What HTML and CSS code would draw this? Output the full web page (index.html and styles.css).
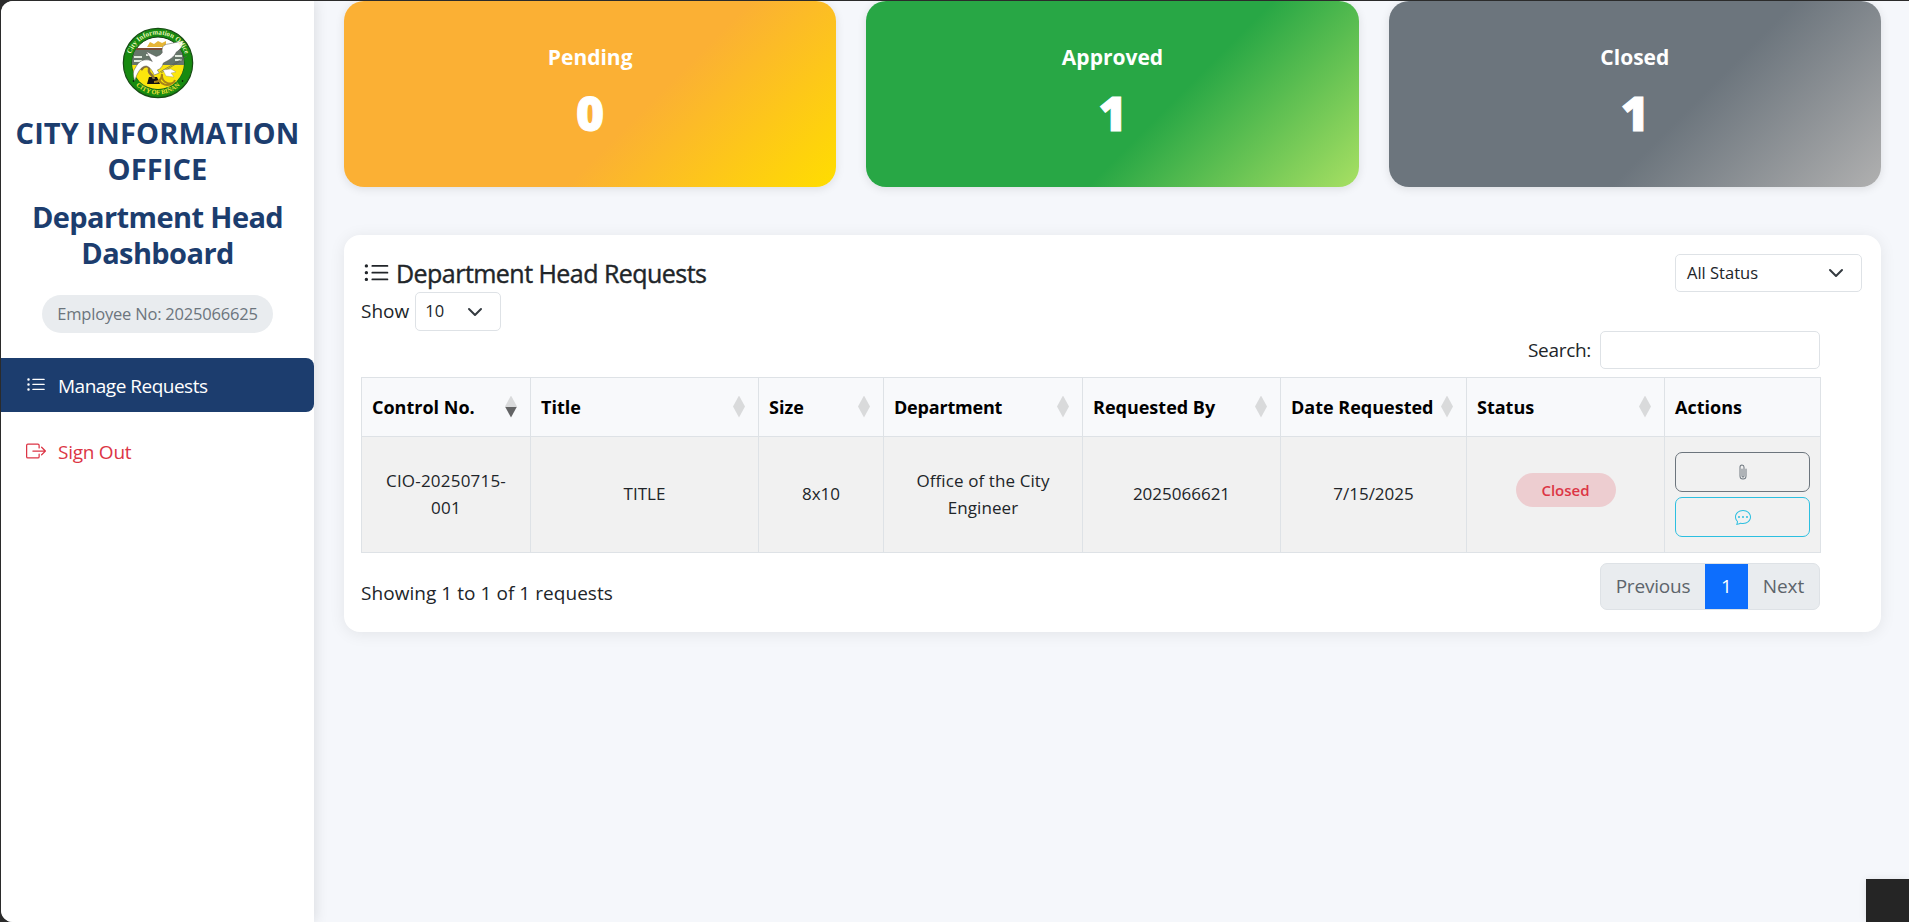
FILE: index.html
```html
<!DOCTYPE html>
<html lang="en">
<head>
<meta charset="utf-8">
<title>Department Head Dashboard</title>
<link rel="stylesheet" href="styles.css">
</head>
<body>
<div class="window">
  <aside class="sidebar">
    <svg class="seal" viewBox="0 0 72 72">
      <defs>
        <path id="arc-top" d="M7.500 36a28.500 28.500 0 0 1 57 0"/>
        <path id="arc-bottom" d="M4.500 36a31.500 31.500 0 0 0 63 0"/>
        <clipPath id="seal-inner"><circle cx="36" cy="36" r="26"/></clipPath>
      </defs>
      <circle cx="36" cy="36" r="34.700" fill="#178a10" stroke="#174c14" stroke-width="1.200"/>
      <circle cx="36" cy="36" r="26" fill="#fff" stroke="#123c10" stroke-width="1"/>
      <g clip-path="url(#seal-inner)">
        <path d="M8 38h56v28H8z" fill="#fbe60c"/>
        <path d="M10 27l4-5h44l4 5v11H10z" fill="#66766a"/>
        <path d="M10 21h52v2H10z" fill="#7d4b35"/>
        <path d="M12 29h8v2h-8zM12 33h8v2h-8zM24 27h4v2h-4zM53 28h7v2h-7zM53 32h7v2h-7z" fill="#dfe9dc"/>
        <path d="M25 20l3-5 4 2 4-3 4 2 4-2v6z" fill="#e6b535"/>
        <path d="M25 57l2-7h8l3 7z" fill="#111"/>
        <path d="M40 47c0 5-3 8-8 8M40 48c-1 8 11 12 13 5M37 53c3 5 8 6 12 4" fill="none" stroke="#a88418" stroke-width="2"/>
        <path d="M19 43c4-6 9-4 8 0s4 4 5 9" fill="none" stroke="#8b7038" stroke-width="2.500"/>
      </g>
      <path d="M12.800 54c-2-6-2-10 .5-13 2-4 5-7.500 9-8 3-.4 6 0 8 1.500l-6-10 4 2 6 3c3-1 5-2 6-4-1-5 1-8 6-8.500l14-3c2 3-2 9-6 11-2 5-7 8-13 11-1 4-3 6-6 7l2 3-5 2c-2-4-4-8-8-9-5 0-9 6-11.500 15z" fill="#fff" stroke="#555" stroke-width=".5"/>
      <path d="M65 29L38 45M62 32L39 46" stroke="#555" stroke-width=".6"/>
      <path d="M41 43l8-1 5 3-5 1 3 4-8-1z" fill="#fff" stroke="#777" stroke-width=".3"/>
      <text class="seal-text"><textPath href="#arc-top" startOffset="50%" text-anchor="middle">City Information Office</textPath></text>
      <text class="seal-text seal-city"><textPath href="#arc-bottom" startOffset="50%" text-anchor="middle">CITY OF BIÑAN</textPath></text>
      <circle cx="11.500" cy="54" r=".8"/><circle cx="60.500" cy="54" r=".8"/>
    </svg>
    <h1 class="brand">CITY INFORMATION<br>OFFICE</h1>
    <h2 class="brand role">Department Head<br>Dashboard</h2>
    <div class="employee">Employee No: 2025066625</div>
    <nav class="nav">
      <a class="nav-item active"><svg class="nav-icon" viewBox="0 0 16 16"><path fill="currentColor" fill-rule="evenodd" d="M5 11.500a.5.5 0 0 1 .5-.5h9a.5.5 0 0 1 0 1h-9a.5.5 0 0 1-.5-.5m0-4a.5.5 0 0 1 .5-.5h9a.5.5 0 0 1 0 1h-9a.5.5 0 0 1-.5-.5m0-4a.5.5 0 0 1 .5-.5h9a.5.5 0 0 1 0 1h-9a.5.5 0 0 1-.5-.5m-3 1a1 1 0 1 0 0-2 1 1 0 0 0 0 2m0 4a1 1 0 1 0 0-2 1 1 0 0 0 0 2m0 4a1 1 0 1 0 0-2 1 1 0 0 0 0 2"/></svg><span class="nav-text">Manage Requests</span></a>
      <a class="nav-item signout"><svg class="nav-icon" viewBox="0 0 16 16"><path fill="currentColor" fill-rule="evenodd" d="M10 12.500a.5.5 0 0 1-.5.5h-8a.5.5 0 0 1-.5-.5v-9a.5.5 0 0 1 .5-.5h8a.5.5 0 0 1 .5.5v2a.5.5 0 0 0 1 0v-2A1.500 1.500 0 0 0 9.500 2h-8A1.500 1.500 0 0 0 0 3.500v9A1.500 1.500 0 0 0 1.500 14h8a1.500 1.500 0 0 0 1.500-1.500v-2a.5.5 0 0 0-1 0z"/><path fill="currentColor" fill-rule="evenodd" d="M15.854 8.354a.5.5 0 0 0 0-.708l-3-3a.5.5 0 0 0-.708.708L14.293 7.500H5.500a.5.5 0 0 0 0 1h8.793l-2.147 2.146a.5.5 0 0 0 .708.708z"/></svg><span class="nav-text">Sign Out</span></a>
    </nav>
  </aside>
  <main class="main">
    <section class="cards">
      <div class="card pending"><div class="card-label">Pending</div><div class="card-count">0</div></div>
      <div class="card approved"><div class="card-label">Approved</div><div class="card-count">1</div></div>
      <div class="card closed"><div class="card-label">Closed</div><div class="card-count">1</div></div>
    </section>
    <section class="panel">
      <div class="panel-head">
        <h3 class="panel-title"><svg class="title-icon" viewBox="0 0 16 16"><path fill="currentColor" fill-rule="evenodd" d="M5 11.500a.5.5 0 0 1 .5-.5h9a.5.5 0 0 1 0 1h-9a.5.5 0 0 1-.5-.5m0-4a.5.5 0 0 1 .5-.5h9a.5.5 0 0 1 0 1h-9a.5.5 0 0 1-.5-.5m0-4a.5.5 0 0 1 .5-.5h9a.5.5 0 0 1 0 1h-9a.5.5 0 0 1-.5-.5m-3 1a1 1 0 1 0 0-2 1 1 0 0 0 0 2m0 4a1 1 0 1 0 0-2 1 1 0 0 0 0 2m0 4a1 1 0 1 0 0-2 1 1 0 0 0 0 2"/></svg><span class="title-text">Department Head Requests</span></h3>
        <div class="select status-filter"><span>All Status</span><svg class="chevron" viewBox="0 0 16 16"><path d="M2 5l6 6 6-6"/></svg></div>
      </div>
      <div class="length"><span>Show</span><div class="select length-select"><span>10</span><svg class="chevron" viewBox="0 0 16 16"><path d="M2 5l6 6 6-6"/></svg></div></div>
      <div class="table-area">
        <div class="search"><label class="search-label" for="q">Search:</label><input id="q" class="search-input" type="text"></div>
        <table class="grid">
          <colgroup><col class="c1"><col class="c2"><col class="c3"><col class="c4"><col class="c5"><col class="c6"><col class="c7"><col class="c8"></colgroup>
          <thead><tr>
            <th><div class="th desc"><span>Control No.</span><i class="sort"></i></div></th>
            <th><div class="th"><span>Title</span><i class="sort"></i></div></th>
            <th><div class="th"><span>Size</span><i class="sort"></i></div></th>
            <th><div class="th tight"><span>Department</span><i class="sort"></i></div></th>
            <th><div class="th"><span>Requested By</span><i class="sort"></i></div></th>
            <th><div class="th"><span>Date Requested</span><i class="sort"></i></div></th>
            <th><div class="th"><span>Status</span><i class="sort"></i></div></th>
            <th><div class="th"><span>Actions</span></div></th>
          </tr></thead>
          <tbody><tr>
            <td class="control">CIO-20250715-<br>001</td>
            <td>TITLE</td>
            <td>8x10</td>
            <td class="dept">Office of the City<br>Engineer</td>
            <td>2025066621</td>
            <td>7/15/2025</td>
            <td class="state"><span class="badge">Closed</span></td>
            <td class="tools"><div class="actions">
              <button class="btn attach"><svg class="btn-icon" viewBox="0 0 16 16"><path fill="currentColor" d="M4.500 3a2.500 2.500 0 0 1 5 0v9a1.500 1.500 0 0 1-3 0V5a.5.5 0 0 1 1 0v7a.5.5 0 0 0 1 0V3a1.500 1.500 0 1 0-3 0v9a2.500 2.500 0 0 0 5 0V5a.5.5 0 0 1 1 0v7a3.500 3.500 0 1 1-7 0z"/></svg></button>
              <button class="btn chat"><svg class="btn-icon" viewBox="0 0 16 16"><path fill="currentColor" d="M5 8a1 1 0 1 1-2 0 1 1 0 0 1 2 0m4 0a1 1 0 1 1-2 0 1 1 0 0 1 2 0m3 1a1 1 0 1 0 0-2 1 1 0 0 0 0 2"/><path fill="currentColor" d="m2.165 15.803.02-.004c1.830-.363 2.948-.842 3.468-1.105A9 9 0 0 0 8 15c4.418 0 8-3.134 8-7s-3.582-7-8-7-8 3.134-8 7c0 1.760.743 3.370 1.970 4.600a10.400 10.400 0 0 1-.524 2.318l-.003.011a11 11 0 0 1-.244.637c-.079.186.074.394.273.362a22 22 0 0 0 .693-.125m.8-3.108a1 1 0 0 0-.287-.801C1.618 10.830 1 9.468 1 8c0-3.192 3.004-6 7-6s7 2.808 7 6-3.004 6-7 6a8 8 0 0 1-2.088-.272 1 1 0 0 0-.711.074c-.387.196-1.240.570-2.634.893a11 11 0 0 0 .398-2"/></svg></button>
            </div></td>
          </tr></tbody>
        </table>
        <div class="table-foot">
          <div class="info">Showing 1 to 1 of 1 requests</div>
          <div class="pager"><span class="page prev">Previous</span><span class="page current">1</span><span class="page next">Next</span></div>
        </div>
      </div>
    </section>
  </main>
</div>
<div class="corner-box"></div>
</body>
</html>
```

FILE: styles.css
```css
* { box-sizing: border-box; }
body {
  margin: 0;
  width: 1909px;
  height: 922px;
  overflow: hidden;
  background: #2b2b2b;
  color: #212529;
  font-family: "Open Sans", "Noto Sans", sans-serif;
  font-size: 19px;
  line-height: 1.5;
}
.window {
  display: flex;
  width: 1908px;
  height: 921px;
  margin: 1px 0 0 1px;
  border-radius: 12px 0 0 12px;
  overflow: hidden;
  background: #f5f7fb;
}
.sidebar {
  position: relative;
  display: flex;
  flex-direction: column;
  align-items: center;
  width: 313px;
  height: 921px;
  padding-top: 26px;
  background: #fff;
  box-shadow: 2px 0 12px rgba(0, 0, 0, 0.1);
}
.seal { width: 72px; height: 72px; margin-bottom: 16px; }
.seal-text { font: 700 7px "Liberation Serif", serif; fill: #e8f5b8; }
.seal-city { fill: #f3e23b; font-size: 6.500px; }
.brand {
  margin: 0 0 12px;
  color: #1c3d6e;
  font-size: 29px;
  font-weight: 700;
  line-height: 36px;
  letter-spacing: 0.1px;
  text-align: center;
}
.role { letter-spacing: -0.6px; }
.employee {
  width: 231px;
  height: 38px;
  margin-top: 12px;
  border-radius: 19px;
  background: #e9ecef;
  color: #6c757d;
  font-size: 16.500px;
  line-height: 38px;
  letter-spacing: -0.2px;
  text-align: center;
}
.nav { width: 100%; margin-top: 25px; }
.nav-item {
  display: flex;
  align-items: center;
  gap: 12px;
  height: 54px;
  margin-bottom: 12px;
  padding-left: 25px;
  border-radius: 0 8px 8px 0;
}
.nav-item.active { background: #1c3d6e; color: #fff; letter-spacing: -0.5px; }
.nav-item.signout { color: #dc3545; letter-spacing: -0.25px; }
.nav-icon { width: 20px; height: 20px; }
.nav-text { padding-top: 2px; }
.main { width: 1595px; padding: 0 28px 0 30px; }
.cards { display: grid; grid-template-columns: repeat(3, 1fr); gap: 30px; }
.card {
  height: 186px;
  padding-top: 39px;
  border-radius: 20px;
  box-shadow: 0 2px 10px rgba(0, 0, 0, 0.1);
  color: #fff;
  text-align: center;
}
.pending { background: linear-gradient(135deg, #fbb034 60%, #ffdd00 100%); }
.approved { background: linear-gradient(135deg, #28a745 60%, #a8e063 100%); }
.closed { background: linear-gradient(135deg, #6c757d 60%, #b0b0b0 100%); }
.card-label { font-size: 21px; font-weight: 700; line-height: 34px; }
.card-count { font-size: 48px; font-weight: 800; line-height: 78px; -webkit-text-stroke: 1px #fff; }
.panel {
  height: 397px;
  margin-top: 48px;
  padding: 19px 19px 0 17px;
  border-radius: 16px;
  background: #fff;
  box-shadow: 0 2px 16px rgba(0, 0, 0, 0.08);
}
.panel-head { display: flex; justify-content: space-between; height: 38px; }
.panel-title {
  display: flex;
  align-items: center;
  gap: 6px;
  margin: 0;
  padding-left: 2px;
  font-size: 25px;
  font-weight: 500;
  letter-spacing: -0.54px;
}
.title-icon { width: 27px; height: 27px; }
.title-text { padding-top: 2px; -webkit-text-stroke: 0.4px #212529; }
.select {
  display: flex;
  align-items: center;
  justify-content: space-between;
  height: 39px;
  padding: 0 17px 0 11px;
  border: 1px solid #dee2e6;
  border-radius: 5px;
  font-size: 16.500px;
}
.status-filter { width: 187px; height: 38px; }
.length-select { width: 86px; padding-left: 9px; }
.chevron { width: 16px; height: 16px; fill: none; stroke: #343a40; stroke-width: 2; stroke-linecap: round; stroke-linejoin: round; }
.length { display: flex; align-items: center; gap: 6px; height: 39px; }
.table-area { width: 1459px; }
.search { display: flex; align-items: center; justify-content: flex-end; gap: 9px; height: 38px; }
.search-label { letter-spacing: -0.3px; }
.search-input { width: 220px; height: 38px; border: 1px solid #dee2e6; border-radius: 5px; }
.grid {
  width: 1459px;
  margin-top: 8px;
  border-collapse: collapse;
  table-layout: fixed;
}
.c1 { width: 169px; }
.c2 { width: 228px; }
.c3 { width: 125px; }
.c4 { width: 199px; }
.c5 { width: 198px; }
.c6 { width: 186px; }
.c7 { width: 198px; }
.c8 { width: 156px; }
.grid th, .grid td { border: 1px solid #dee2e6; padding: 0 10px; }
.grid th { height: 59px; padding-right: 13px; padding-top: 1px; background: #f8f9fb; color: #000; font-size: 18px; font-weight: 700; text-align: left; }
.grid td { height: 116px; padding-bottom: 2px; background: #f1f1f1; font-size: 17px; line-height: 27px; text-align: center; }
.grid td.control { letter-spacing: 0.2px; }
.grid td.dept { letter-spacing: 0.1px; }
.grid td.state { padding-bottom: 9px; }
.grid td.tools { padding-bottom: 0; }
.th { display: flex; align-items: center; justify-content: space-between; white-space: nowrap; }
.tight { letter-spacing: -0.2px; }
.sort { width: 12px; height: 22px; margin-top: -2px; background: #d9dadb; clip-path: polygon(50% 0, 100% 50%, 50% 100%, 0 50%); }
.desc .sort { background: linear-gradient(#d9dadb 50%, #636465 50%); }
.badge {
  display: inline-block;
  width: 100px;
  height: 34px;
  border-radius: 17px;
  background: #edcdd0;
  color: #dc3545;
  font-size: 15px;
  font-weight: 600;
  line-height: 34px;
}
.actions { display: flex; flex-direction: column; gap: 5px; }
.btn {
  display: flex;
  align-items: center;
  justify-content: center;
  height: 40px;
  padding: 0;
  border: 1px solid;
  border-radius: 7px;
  background: transparent;
}
.attach { color: #6c757d; }
.chat { color: #2cbfe0; }
.btn-icon { width: 16px; height: 16px; }
.table-foot { display: flex; justify-content: space-between; padding-top: 10px; }
.info { padding-top: 16px; letter-spacing: 0.05px; }
.pager { display: flex; height: 47px; border-radius: 7px; overflow: hidden; border: 1px solid #dee2e6; background: #e9ecef; color: #5d646b; }
.page { display: flex; align-items: center; justify-content: center; }
.prev { width: 104px; letter-spacing: -0.2px; }
.current { width: 43px; margin: -1px 0; background: #0d6efd; color: #fff; }
.next { width: 71px; }
.corner-box { position: absolute; left: 1866px; top: 879px; width: 43px; height: 43px; background: #252525; box-shadow: 0 0 8px rgba(0, 0, 0, 0.08); }
```
